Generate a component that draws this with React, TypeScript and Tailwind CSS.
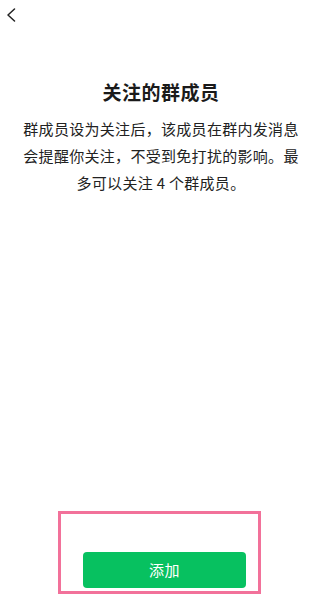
import { useState } from 'react'

export default function App() {
  const [count, setCount] = useState(0)

  return (
    <div
      className="flex h-[600px] w-[322px] flex-col bg-white text-[#1a1a1a]"
      style={{ fontFamily: '"Noto Sans CJK SC", "Noto Sans", sans-serif' }}
    >
      <div className="flex h-[28px] items-center pl-[5px] pt-[1px]">
        <button className="flex h-[18px] w-[12px] items-center justify-center" aria-label="返回">
          <svg width="10" height="14" viewBox="0 0 10 14" fill="none">
            <path d="M8.5 1 L2 7 L8.5 13" stroke="#222" strokeWidth="1.5" strokeLinecap="round" strokeLinejoin="round" />
          </svg>
        </button>
      </div>

      <h1 className="mt-[50px] text-center text-[19px] font-bold leading-[27px] tracking-[0.5px]">关注的群成员</h1>

      <p className="mt-[10px] px-[22px] text-center text-[15px] leading-[27px] tracking-[0.3px] text-[#222]">
        群成员设为关注后，该成员在群内发消息会提醒你关注，不受到免打扰的影响。最多可以关注 4 个群成员。
      </p>

      <div className="flex-1" />

      <div className="mb-[6px] ml-[58px] w-[203px] border-[3px] border-[#f2719a] pb-[3px] pl-[22px] pr-[12px] pt-[38px]">
        <button
          onClick={() => setCount(count + 1)}
          className="flex h-[36px] w-full items-center justify-center rounded-[4px] bg-[#07c160] text-[15px] tracking-[0.5px] text-white"
        >
          添加
        </button>
      </div>
    </div>
  )
}
